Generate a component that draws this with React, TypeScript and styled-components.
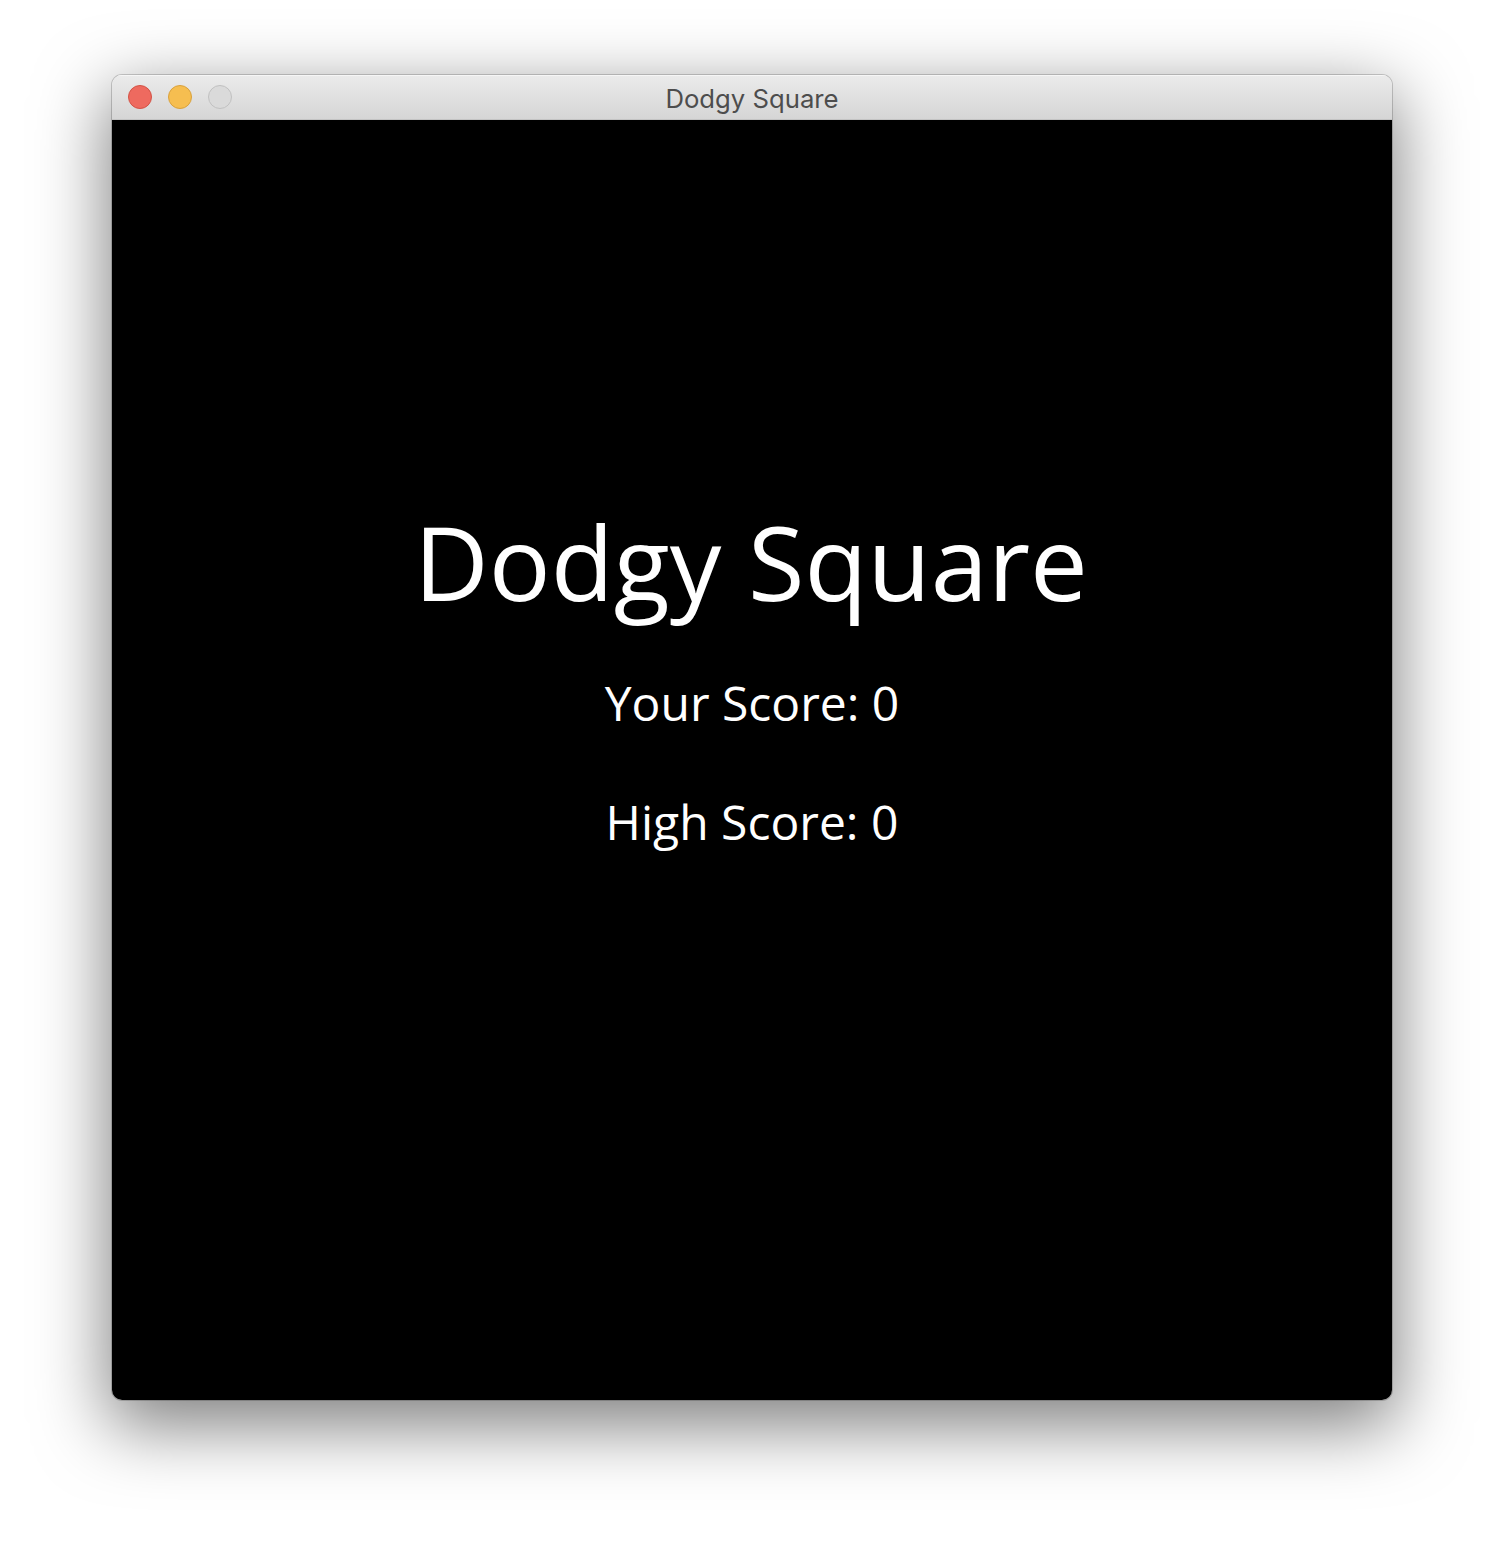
import React from "react";
import styled, { createGlobalStyle } from "styled-components";

const Global = createGlobalStyle`
  html, body {
    margin: 0;
    padding: 0;
    background: #ffffff;
  }
  #root {
    width: 1504px;
    height: 1548px;
  }
`;

const Stage = styled.div`
  width: 1504px;
  height: 1548px;
  box-sizing: border-box;
  padding: 75px 112px 0 112px;
  background: #ffffff;
`;

const Window = styled.div`
  width: 1280px;
  border-radius: 10px;
  overflow: hidden;
  box-shadow: 0 0 0 1px rgba(0, 0, 0, 0.18), 0 22px 70px 4px rgba(0, 0, 0, 0.5);
  display: flex;
  flex-direction: column;
`;

const TitleBar = styled.div`
  height: 44px;
  position: relative;
  display: flex;
  align-items: center;
  justify-content: center;
  background: linear-gradient(to bottom, #ebebeb 0%, #d5d5d5 100%);
  border-bottom: 1px solid #c3c3c3;
  box-shadow: inset 0 1px 0 #f6f6f6;
`;

const Lights = styled.div`
  position: absolute;
  left: 16px;
  top: 10px;
  display: flex;
  gap: 16px;
`;

const Light = styled.span<{ $fill: string; $edge: string }>`
  width: 22px;
  height: 22px;
  border-radius: 50%;
  background: ${(p) => p.$fill};
  border: 1px solid ${(p) => p.$edge};
`;

const WindowTitle = styled.div`
  font-family: Inter, "Liberation Sans", sans-serif;
  font-size: 25.7px;
  color: #4d4d4d;
  line-height: 44px;
  padding-top: 4px;
`;

const Content = styled.div`
  height: 1280px;
  background: #000000;
  display: flex;
  flex-direction: column;
  align-items: center;
  padding-top: 389.5px;
  box-sizing: border-box;
  font-family: "Open Sans", sans-serif;
  color: #ffffff;
`;

const GameTitle = styled.div`
  font-size: 103px;
  line-height: 103px;
  margin-left: -2px;
`;

const ScoreLine = styled.div<{ $gap: number }>`
  font-size: 48px;
  line-height: 48px;
  margin-top: ${(p) => p.$gap}px;
`;

export default function App() {
  return (
    <>
      <Global />
      <Stage>
        <Window>
          <TitleBar>
            <Lights>
              <Light $fill="#ee6a5f" $edge="#d25346" />
              <Light $fill="#f6be50" $edge="#d8a13d" />
              <Light $fill="#dadada" $edge="#c0c0c0" />
            </Lights>
            <WindowTitle>Dodgy Square</WindowTitle>
          </TitleBar>
          <Content>
            <GameTitle>Dodgy Square</GameTitle>
            <ScoreLine $gap={66}>Your Score: 0</ScoreLine>
            <ScoreLine $gap={71}>High Score: 0</ScoreLine>
          </Content>
        </Window>
      </Stage>
    </>
  );
}
